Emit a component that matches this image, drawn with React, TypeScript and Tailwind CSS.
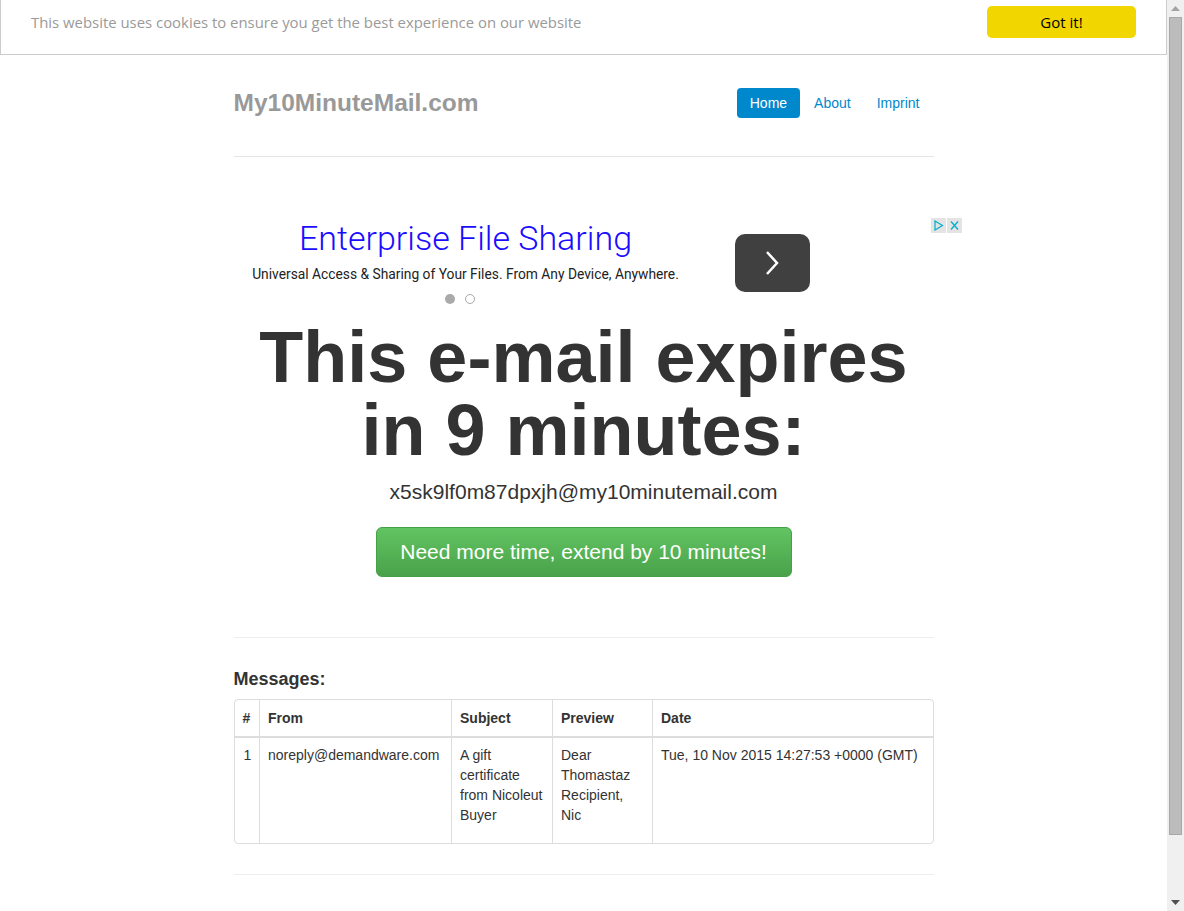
import React from 'react';

const sans = { fontFamily: '"Liberation Sans", Arial, sans-serif' };

function CookieBar() {
  return (
    <div
      className="flex h-[55px] items-start justify-between border-x border-b border-[#cccccc] bg-white pl-[30px] pr-[30px] pt-[6px]"
      style={{ fontFamily: '"Open Sans", sans-serif' }}
    >
      <p className="mt-[5px] text-[14.9px] leading-[22px] text-[#9a9a9a]">
        This website uses cookies to ensure you get the best experience on our website
      </p>
      <button className="h-[32px] w-[149px] rounded-[5px] bg-[#f1d600] text-[15px] text-black">Got it!</button>
    </div>
  );
}

function Header() {
  return (
    <div className="flex h-[40px] items-center justify-between">
      <h3 className="text-[24.5px] font-bold leading-[40px] text-[#999999]">My10MinuteMail.com</h3>
      <nav className="flex gap-[2px] pr-[2px] text-[14px] leading-[20px]">
        <a className="rounded-[4px] bg-[#0088cc] px-[13px] py-[5px] text-white">Home</a>
        <a className="rounded-[4px] px-3 py-[5px] text-[#0088cc]">About</a>
        <a className="rounded-[4px] px-3 py-[5px] text-[#0088cc]">Imprint</a>
      </nav>
    </div>
  );
}

function AdBanner() {
  return (
    <div className="relative flex h-[90px] w-[728px]" style={{ fontFamily: 'Roboto, sans-serif' }}>
      <div className="flex w-[464px] flex-col items-center pt-[1px]">
        <div className="text-[34px] font-light leading-[38px] text-[#1a0dff]">Enterprise File Sharing</div>
        <div className="mt-[8px] text-[13.8px] leading-[18px] text-[#222222]">
          Universal Access &amp; Sharing of Your Files. From Any Device, Anywhere.
        </div>
        <div className="mt-[11px] flex gap-[10px] pr-[12px]">
          <span className="h-[10px] w-[10px] rounded-full bg-[#aaaaaa]" />
          <span className="h-[10px] w-[10px] rounded-full border border-[#aaaaaa]" />
        </div>
      </div>
      <div className="ml-[37px] mt-[16px] flex h-[58px] w-[75px] items-center justify-center rounded-[10px] bg-[#404040]">
        <svg width="16" height="26" viewBox="0 0 16 26" fill="none" stroke="white" strokeWidth="2.5">
          <path d="M3 2 L13 13 L3 24" />
        </svg>
      </div>
      <div className="absolute right-0 top-0 flex gap-[1px]">
        <span className="flex h-[15px] w-[15px] items-center justify-center bg-[#e4e4e4]">
          <svg width="11" height="11" viewBox="0 0 11 11" fill="none" stroke="#00aecd" strokeWidth="1.2">
            <path d="M2 1 L9.5 5.5 L2 10 Z" />
          </svg>
        </span>
        <span className="flex h-[15px] w-[15px] items-center justify-center bg-[#e4e4e4]">
          <svg width="11" height="11" viewBox="0 0 11 11" fill="none" stroke="#00aecd" strokeWidth="1.3">
            <path d="M2 1.5 L9 9.5 M9 1.5 L2 9.5" />
          </svg>
        </span>
      </div>
    </div>
  );
}

function MessagesTable() {
  return (
    <div className="overflow-hidden rounded-[4px] border border-[#dddddd]">
      <table className="w-full table-fixed border-collapse text-[14px] leading-[20px] text-[#333333]">
        <colgroup>
          <col className="w-[25px]" />
          <col className="w-[192px]" />
          <col className="w-[101px]" />
          <col className="w-[100px]" />
          <col />
        </colgroup>
        <thead>
          <tr className="text-left font-bold">
            <th className="border-b-2 border-[#dddddd] py-2 pl-[8px]">#</th>
            <th className="border-b-2 border-l border-[#dddddd] px-2 py-2">From</th>
            <th className="border-b-2 border-l border-[#dddddd] px-2 py-2">Subject</th>
            <th className="border-b-2 border-l border-[#dddddd] px-2 py-2">Preview</th>
            <th className="border-b-2 border-l border-[#dddddd] px-2 py-2">Date</th>
          </tr>
        </thead>
        <tbody>
          <tr className="align-top">
            <td className="pb-[18px] pl-[9px] pt-[7px]">1</td>
            <td className="border-l border-[#dddddd] px-2 pb-[18px] pt-[7px]">noreply@demandware.com</td>
            <td className="border-l border-[#dddddd] px-2 pb-[18px] pt-[7px]">A gift certificate from Nicoleut Buyer</td>
            <td className="border-l border-[#dddddd] px-2 pb-[18px] pt-[7px]">Dear Thomastaz Recipient, Nic</td>
            <td className="border-l border-[#dddddd] px-2 pb-[18px] pt-[7px]">Tue, 10 Nov 2015 14:27:53 +0000 (GMT)</td>
          </tr>
        </tbody>
      </table>
    </div>
  );
}

function Scrollbar() {
  return (
    <div className="flex w-[17px] flex-col bg-[#f0f0f0]">
      <div className="flex h-[17px] items-center justify-center">
        <svg width="9" height="5" viewBox="0 0 9 5">
          <path d="M0 5 L4.5 0 L9 5 Z" fill="#a3a3a3" />
        </svg>
      </div>
      <div className="mx-[2px] h-[818px] border border-[#a8a8a8] bg-[#bcbcbc]" />
      <div className="flex-1" />
      <div className="flex h-[17px] items-center justify-center">
        <svg width="9" height="5" viewBox="0 0 9 5">
          <path d="M0 0 L9 0 L4.5 5 Z" fill="#505050" />
        </svg>
      </div>
    </div>
  );
}

export default function App() {
  return (
    <div className="flex h-[911px] w-full overflow-hidden bg-white" style={sans}>
      <div className="flex-1">
        <CookieBar />
        <div className="mx-auto w-[700px] pt-[28px]">
          <div className="border-b border-[#e5e5e5] pb-[33px]">
            <Header />
          </div>

          <div className="pt-[61px]">
            <AdBanner />
          </div>

          <div className="mt-[13px] text-center text-[#333333]">
            <h1 className="text-[72px] font-bold leading-[73px]">
              This e-mail expires
              <br />
              in 9 minutes:
            </h1>
            <p className="mt-[10px] text-[21px] leading-[30px]">x5sk9lf0m87dpxjh@my10minutemail.com</p>
            <button className="mt-[20px] h-[50px] w-[416px] rounded-[6px] border border-[#46a046] bg-linear-to-b from-[#62c462] to-[#4aa24a] text-[21px] text-white">
              Need more time, extend by 10 minutes!
            </button>
          </div>

          <hr className="mt-[60px] border-t border-[#eeeeee]" />

          <h4 className="mt-[31px] text-[18px] font-bold leading-[20px] text-[#333333]">Messages:</h4>
          <div className="mt-[10px]">
            <MessagesTable />
          </div>

          <hr className="mt-[30px] border-t border-[#eeeeee]" />
        </div>
      </div>
      <Scrollbar />
    </div>
  );
}
